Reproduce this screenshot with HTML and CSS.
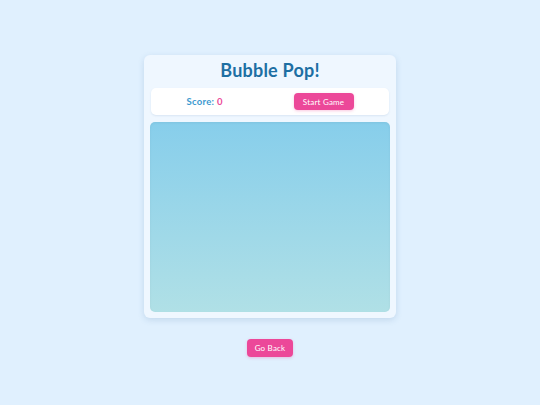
FILE: index.html
```html
<!DOCTYPE html>
<html>
<head>
<meta charset="utf-8">
<link rel="stylesheet" href="styles.css">
</head>
<body>
<div class="page">
  <div class="card">
    <h1 class="title">Bubble Pop!</h1>
    <div class="scorebar">
      <div class="score">Score: <span class="score-value">0</span></div>
      <button class="btn">Start Game</button>
    </div>
    <div class="game-area"></div>
  </div>
  <button class="btn back">Go Back</button>
</div>
</body>
</html>
```
FILE: styles.css
```css
html, body {
  margin: 0;
  padding: 0;
}
body {
  background: #e0f0fe;
  font-family: "Lato", "Noto Sans", sans-serif;
  width: 540px;
  height: 405px;
  overflow: hidden;
}
.page {
  display: flex;
  flex-direction: column;
  align-items: center;
  padding-top: 55px;
}
.card {
  width: 252px;
  box-sizing: border-box;
  background: #eff7ff;
  border-radius: 6px;
  padding: 4px 6px 6px;
  box-shadow: 0 2px 6px rgba(60, 110, 160, 0.18);
  display: flex;
  flex-direction: column;
}
.title {
  margin: 0 0 7px;
  font-size: 18px;
  line-height: 22px;
  font-weight: 700;
  letter-spacing: 0.2px;
  color: #1d6fa3;
  text-align: center;
}
.scorebar {
  height: 27px;
  margin: 0 1px 7px;
  background: #ffffff;
  border-radius: 5px;
  box-shadow: 0 1px 2px rgba(60, 110, 160, 0.12);
  display: flex;
  align-items: center;
  justify-content: space-around;
}
.score {
  font-size: 9.5px;
  font-weight: 700;
  letter-spacing: 0.3px;
  color: #3d9ad0;
}
.score-value {
  color: #ec4899;
}
.btn {
  font-family: inherit;
  background: #ec4899;
  color: #ffffff;
  border: none;
  border-radius: 4px;
  font-size: 8px;
  letter-spacing: 0.2px;
  height: 17px;
  width: 60px;
  padding: 0;
  box-shadow: 0 1px 3px rgba(236, 72, 153, 0.3);
}
.game-area {
  height: 190px;
  border-radius: 5px;
  background: linear-gradient(to bottom, #87ceeb, #b0e0e6);
  box-shadow: inset 0 1px 3px rgba(0, 0, 0, 0.05);
}
.back {
  margin-top: 21px;
  width: 46px;
  height: 18px;
}
```
